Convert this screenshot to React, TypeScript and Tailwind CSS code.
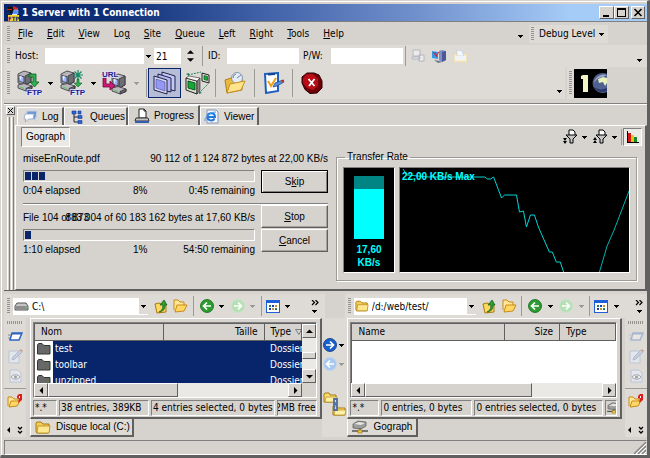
import type { ReactNode } from "react";

const raised = "border border-t-white border-l-white border-r-[#606060] border-b-[#606060] bg-[#d6d3ce]";
const sunken = "border border-t-[#808080] border-l-[#808080] border-r-white border-b-white";
const sans = "font-['Liberation_Sans',Arial,sans-serif]";

type Entry = { name: string; size: string; type: string };

const menus = ["File", "Edit", "View", "Log", "Site", "Queue", "Left", "Right", "Tools", "Help"];
const underlined: Record<string, number> = { Log: 2 };

const localFiles: Entry[] = [
  { name: "test", size: "", type: "Dossier" },
  { name: "toolbar", size: "", type: "Dossier" },
  { name: "unzipped", size: "", type: "Dossier" },
];

const ratePoints =
  "3,1 5,4 7,7 29,9 85,9 88,11 91,11 94,9 102,30 105,27 117,27 120,44 124,43 127,59 131,47 135,47 139,59 150,84 153,84 157,94 161,94 165,106";

function Grip({ className = "h-4" }: { className?: string }) {
  return (
    <div
      className={`w-[3px] shrink-0 bg-[repeating-linear-gradient(to_bottom,#94928c_0px,#94928c_1px,#dedbd6_1px,#dedbd6_2px)] ${className}`}
    />
  );
}

function HGrip() {
  return <div className="h-[3px] w-4 bg-[repeating-linear-gradient(to_right,#94928c_0px,#94928c_1px,#dedbd6_1px,#dedbd6_2px)]" />;
}

function Sep({ className = "h-5" }: { className?: string }) {
  return <div className={`w-px shrink-0 bg-[#9c9a94] ${className}`} />;
}

function Caret({ muted = false }: { muted?: boolean }) {
  return (
    <svg width="5" height="3" viewBox="0 0 5 3" className="shrink-0" shapeRendering="crispEdges">
      <path d="M0 0h5v1H4v1H3v1H2V2H1V1H0z" fill={muted ? "#9c9a94" : "#000"} />
    </svg>
  );
}

function CaretButton({ label, muted = false, className = "w-3" }: { label: string; muted?: boolean; className?: string }) {
  return (
    <button type="button" aria-label={label} disabled={muted} className={`flex h-4 items-center justify-center ${className}`}>
      <Caret muted={muted} />
    </button>
  );
}

function IconButton({ label, children, className = "", disabled = false }: { label: string; children: ReactNode; className?: string; disabled?: boolean }) {
  return (
    <button type="button" aria-label={label} disabled={disabled} className={`flex shrink-0 items-center justify-center ${className}`}>
      {children}
    </button>
  );
}

function Mnemonic({ text, at = 0 }: { text: string; at?: number }) {
  return (
    <>
      {text.slice(0, at)}
      <span className="underline underline-offset-1">{text[at]}</span>
      {text.slice(at + 1)}
    </>
  );
}

/* ---------- icons ---------- */

function AppIcon() {
  return (
    <svg width="14" height="16" viewBox="0 0 14 16" className="shrink-0">
      <path d="M1 2h5v4H1zM3 6h2v2H3z" fill="#111" />
      <path d="M6 1l5 2v3L6 4z" fill="#e02020" />
      <path d="M0 4h5v1H0z" fill="#e02020" />
      <path d="M7 5h4v4H6z" fill="#4f8fe8" stroke="#9cc4ff" strokeWidth=".6" />
      <path d="M5 9h5v1H5z" fill="#dfe8f8" />
      <rect x="1" y="10" width="11" height="6" fill="#ffd820" />
      <text x="1" y="15.500" fontSize="6" fontWeight="bold" fill="#1a1a90">FTP</text>
    </svg>
  );
}

function Computer({ x, y }: { x: number; y: number }) {
  return (
    <g transform={`translate(${x} ${y})`} stroke="#303038" strokeWidth=".8" strokeLinejoin="round">
      <path d="M1 3L7 0l7 2v9l-6 3-7-2z" fill="#b8b8bc" />
      <path d="M8 5l6-3v9l-6 3z" fill="#6d6d74" />
      <path d="M2 4.500l5 1.200v6L2 10.500z" fill="#9fb8ff" />
      <path d="M2.500 5l2.500.6-2 4z" fill="#eef3ff" stroke="none" />
      <path d="M1 14l6-1.500 8 2.500v2.500L9 20l-8-3z" fill="#b9b9bd" />
      <path d="M9 17.500l6-2.500v2.500L9 20z" fill="#66666c" />
      <path d="M3 16.200l4 1.200" stroke="#44c844" />
    </g>
  );
}

function FtpMark({ x, y, text = "FTP" }: { x: number; y: number; text?: string }) {
  return (
    <text
      x={x}
      y={y}
      fontSize="8"
      fontWeight="bold"
      fill="#20208c"
      stroke="#dfe2ff"
      strokeWidth="1.500"
      paintOrder="stroke"
      className="font-['Liberation_Sans',Arial,sans-serif]"
    >
      {text}
    </text>
  );
}

function ConnectIcon() {
  return (
    <svg width="26" height="26" viewBox="0 0 26 26">
      <Computer x={1} y={1} />
      <path d="M13 4h7v8h3l-4.500 5-4.500-5h3V7h-4z" fill="#2eb050" stroke="#0d5a22" strokeWidth=".8" />
      <FtpMark x={11} y={25} />
    </svg>
  );
}

function QuickConnectIcon() {
  return (
    <svg width="26" height="26" viewBox="0 0 26 26">
      <Computer x={1} y={1} />
      <path d="M19 0v10M14 5h10M15.500 1.500l7 7M22.500 1.500l-7 7" stroke="#138a68" strokeWidth="1.200" />
      <path d="M18 9h2v4h3l-4 4-4-4h3z" fill="#2eb050" stroke="#0d5a22" strokeWidth=".6" />
      <FtpMark x={11} y={25} />
    </svg>
  );
}

function UrlIcon() {
  return (
    <svg width="26" height="26" viewBox="0 0 26 26">
      <Computer x={9} y={4} />
      <path d="M1 8h3v6h4v-3l5 5-5 4v-3H1z" fill="#d01878" stroke="#700838" strokeWidth=".8" />
      <FtpMark x={0} y={7} text="URL" />
    </svg>
  );
}

function StackIcon() {
  return (
    <svg width="24" height="24" viewBox="0 0 24 24" strokeLinejoin="round" stroke="#20204c">
      <path d="M9 1l13 4v15L9 16z" fill="#c4c8f4" />
      <path d="M5 3l13 4v14L5 18z" fill="#b2b6ee" />
      <path d="M1 5l13 4v14L1 19z" fill="#d8d8e8" />
      <path d="M3 8l9 3v9l-9-3z" fill="#9498f4" stroke="#5558b0" strokeWidth=".7" />
    </svg>
  );
}

function MirrorIcon() {
  return (
    <svg width="26" height="24" viewBox="0 0 26 24" strokeLinejoin="round">
      <path d="M3 4L16 1M14 22l9-9" stroke="#20805c" strokeDasharray="2 1" />
      <path d="M1 3l3-1v3zM14 20l3 2-3 1z" fill="#20805c" />
      <path d="M1 7l11 3v13L1 19z" fill="#deded8" stroke="#202020" />
      <path d="M3 10l7 2v7l-7-2z" fill="#18a838" stroke="#0b5b1c" />
      <path d="M12 10l3-3v12l-3 4z" fill="#888" stroke="#202020" strokeWidth=".6" />
      <path d="M1 7l3-2 11 2-3 3z" fill="#f4f4f0" stroke="#202020" strokeWidth=".6" />
      <path d="M17 2l7 2v8l-7-2z" fill="#deded8" stroke="#202020" />
      <path d="M19 4.500l3.500 1v4l-3.500-1z" fill="#18a838" stroke="#0b5b1c" strokeWidth=".7" />
    </svg>
  );
}

function OpenFolderIcon() {
  return (
    <svg width="22" height="22" viewBox="0 0 22 22">
      <path d="M1 8l6-2 3 2 8-1v11l-15 3z" fill="#e8b93c" stroke="#b27f14" />
      <circle cx="13" cy="6" r="5.500" fill="#e4ebf4" stroke="#8897ad" />
      <path d="M13 6l4-3M9 6a4 4 0 013-4" stroke="#6684aa" fill="none" />
      <path d="M6 12l15-3-4 9-14 3z" fill="#ffe48b" stroke="#c69222" />
    </svg>
  );
}

function OptionsIcon() {
  return (
    <svg width="22" height="22" viewBox="0 0 22 22">
      <path d="M2 2l13-1v18L3 21z" fill="#fff" stroke="#1f5fbe" strokeWidth="2" />
      <path d="M5 1.500l7-.5v2l-7 .5z" fill="#12448e" />
      <path d="M5 9l3 5 5-8" fill="none" stroke="#eda21a" strokeWidth="2" />
      <path d="M10 15l2-4 8-3 1 2-7 4z" fill="#5a8fe0" stroke="#173f86" strokeWidth=".7" />
      <path d="M18 8.500l3-1v2l-2 1z" fill="#c83018" />
    </svg>
  );
}

function AbortIcon() {
  return (
    <svg width="22" height="22" viewBox="0 0 22 22">
      <path d="M6 1h7l5 2 3 6v7l-5 5-7 .5-5-4L1 11V5z" fill="#6e0008" stroke="#2c0000" />
      <path d="M6 2h6l5 5v7l-5 4-6-2-4-5V6z" fill="#b80c16" />
      <path d="M7.500 7l6 7M13.500 7L8 14" stroke="#fff" strokeWidth="1.800" />
    </svg>
  );
}

function LogoImage() {
  return (
    <svg width="33" height="29" viewBox="0 0 33 29" role="img" aria-label="Globe logo">
      <rect width="33" height="29" fill="#000" />
      <path d="M7 7l2-1h5v17H9V10H7z" fill="#f4f4c4" />
      <path d="M33 5a10 10 0 100 18z" fill="#51618f" />
      <path d="M33 6c-6-2-12 2-13 8 2-4 5-6 9-6z" fill="#9dabc5" />
      <path d="M24 10l5-2 4 1v5l-2 3-2-4-4 1z" fill="#e8f0bc" />
      <path d="M20 18c3 5 8 6 13 4v-3c-5 2-9 2-13-1z" fill="#29376a" />
    </svg>
  );
}

function ServersIcon() {
  return (
    <svg width="14" height="14" viewBox="0 0 14 14">
      <path d="M7 2l3-1 4 1v9l-4 2-3-2z" fill="#7d8dcc" />
      <path d="M10 3l4-1v9l-4 2z" fill="#4b5796" />
      <path d="M0 2l6 1v7L0 9z" fill="#2f9bea" />
      <path d="M1 3l3 4 3-4M3 3l2 5" stroke="#d52838" fill="none" />
      <path d="M2 11l6 1 2 1-4 1z" fill="#707890" />
    </svg>
  );
}

function GhostServersIcon() {
  return (
    <svg width="14" height="14" viewBox="0 0 14 14">
      <path d="M2 1h7v6H2zM1 8h8v2H1zM8 6h5v6H8z" fill="#ebebef" stroke="#aaaab4" strokeWidth=".8" />
    </svg>
  );
}

function GhostFolderIcon() {
  return (
    <svg width="15" height="14" viewBox="0 0 15 14">
      <path d="M1 5h13v8H1z" fill="#f8edcc" stroke="#ecd9a8" />
      <path d="M4 1l5 1 2 5H4z" fill="#f6f9fc" stroke="#bfd0e0" strokeWidth=".7" />
      <path d="M2 7h11v4H2z" fill="#eff4f8" />
    </svg>
  );
}

function LogIcon() {
  return (
    <svg width="15" height="13" viewBox="0 0 15 13">
      <path d="M4 1h10l-1 7h-1l1 3-4-3H3z" fill="#6f98d8" stroke="#c4d2e4" />
      <path d="M2 4h9l-1 5H6l-4 3 1-3H1z" fill="#fbfdff" stroke="#93a7c0" strokeWidth=".8" />
    </svg>
  );
}

function QueueIcon() {
  return (
    <svg width="12" height="14" viewBox="0 0 12 14">
      <path d="M3 3v9h4M3 7h4" fill="none" stroke="#222" />
      <path d="M1 1h4v3H1zM7 1h3v3H7zM7 5.500h4v3H7zM7 10.500h4v3H7z" fill="#2b65d8" stroke="#103a96" strokeWidth=".6" />
    </svg>
  );
}

function ProgressIcon() {
  return (
    <svg width="16" height="16" viewBox="0 0 16 16">
      <path d="M5 1h5l2 2v7H5z" fill="#fff" stroke="#222" />
      <path d="M10 1v2h2" fill="none" stroke="#222" />
      <path d="M2 10h12l1 3H1z" fill="#c4c4c4" stroke="#333" />
      <path d="M1 13h14v2H1z" fill="#355cb0" />
    </svg>
  );
}

function BrowserIcon() {
  return (
    <svg width="15" height="15" viewBox="0 0 15 15">
      <path d="M3 1h9l2 2v11H3z" fill="#f5f8ff" stroke="#8296be" />
      <path d="M3.500 8h7.500c0-5-7.500-5-7.500 0 0 4 5.500 4.500 7 1.500" fill="none" stroke="#2277dc" strokeWidth="2" />
      <path d="M1 12c-1-3 5-9 11-9" fill="none" stroke="#3aa2f0" />
    </svg>
  );
}

function FunnelIcon({ up = false }: { up?: boolean }) {
  return (
    <svg width="16" height="16" viewBox="0 0 16 16">
      <path d={up ? "M3 8l2 3H1zM3 11l2 3H1z" : "M3 12L5 9H1zM3 15l2-3H1z"} fill="#000" />
      <path d="M7 6V1h4l2 2v3" fill="#fff" stroke="#000" />
      <path d="M4 6h11l-4 4v4H8v-4z" fill="#c6c6c6" stroke="#000" />
    </svg>
  );
}

function ChartIcon() {
  return (
    <svg width="14" height="13" viewBox="0 0 14 13" shapeRendering="crispEdges">
      <path d="M2 2h3v9H2z" fill="#d01818" />
      <path d="M5 4h3v7H5z" fill="#e8c418" />
      <path d="M8 6h3v5H8z" fill="#188a28" />
      <path d="M1 0h1v11h11v1H1z" fill="#000" />
    </svg>
  );
}

function DriveIcon() {
  return (
    <svg width="15" height="9" viewBox="0 0 15 9" className="shrink-0">
      <path d="M3 1h9l2 3v4H1V4z" fill="#c4c4c4" stroke="#555" />
      <path d="M1 4h13v3H1z" fill="#8c8c8c" />
      <path d="M11 5.500h2" stroke="#4dd04d" />
    </svg>
  );
}

function FolderIcon({ className = "h-3 w-4" }: { className?: string }) {
  return (
    <svg viewBox="0 0 16 13" className={`shrink-0 ${className}`}>
      <path d="M1 11V2l1-1h4l2 2h6v8l-1 1H2z" fill="#f4cc58" stroke="#a67a0e" />
      <path d="M3 5h12l-1 7H2z" fill="#ffe78d" stroke="#b48a1c" strokeWidth=".8" />
    </svg>
  );
}

function DarkFolderIcon() {
  return (
    <svg width="14" height="12" viewBox="0 0 14 12" className="shrink-0">
      <path d="M.5 11V2l1-1.500H5L7 2.500h6V11z" fill="#686868" stroke="#2c3c28" />
    </svg>
  );
}

function UpFolderIcon() {
  return (
    <svg width="14" height="15" viewBox="0 0 14 15">
      <path d="M1 5l4-1 2 1h5v8l-9 1z" fill="#ffd95f" stroke="#a67a0e" />
      <path d="M5 13c4-2 4-5 3.500-7H6l4-5 3 5h-2c0 4-1 6-6 7z" fill="#2f9c34" stroke="#0e5a14" strokeWidth=".7" />
    </svg>
  );
}

function OpenIcon() {
  return (
    <svg width="15" height="14" viewBox="0 0 15 14">
      <path d="M1 11V1h4l2 2h4v3" fill="#ffe795" stroke="#c98b14" />
      <path d="M4 6l10 0-3 6-9 1z" fill="#ffd766" stroke="#c98b14" />
    </svg>
  );
}

function RoundArrow({ fill, rim, left = false }: { fill: string; rim: string; left?: boolean }) {
  return (
    <svg width="14" height="14" viewBox="0 0 14 14">
      <circle cx="7" cy="7" r="6.500" fill={fill} stroke={rim} strokeWidth=".8" />
      <path d={left ? "M11 7H4M7 3.500L3.500 7 7 10.500" : "M3 7h7M7 3.500L10.500 7 7 10.500"} fill="none" stroke="#fff" strokeWidth="1.700" />
    </svg>
  );
}

function ViewIcon() {
  return (
    <svg width="14" height="13" viewBox="0 0 14 13" shapeRendering="crispEdges">
      <rect width="14" height="13" fill="#1f5fd8" />
      <rect x="1" y="3" width="12" height="9" fill="#fff" />
      <path d="M3 5h2v2H3zM9 8h2v2H9z" fill="#2a7a5c" />
      <path d="M6 5h2v2H6zM3 8h2v2H3z" fill="#1f3fb0" />
      <path d="M9 5h2v2H9zM6 8h2v2H6z" fill="#bd9430" />
    </svg>
  );
}

function RenameIcon({ muted = false }: { muted?: boolean }) {
  return (
    <svg width="15" height="11" viewBox="0 0 15 11" className={muted ? "opacity-30" : ""}>
      <path d="M4 2h10l-3 7H2z" fill="#fff" stroke="#2b65c0" strokeWidth="1.500" />
      <path d="M4 2h10l-.5 1.500H3.500z" fill="#2b65c0" />
      <path d="M0 4h3M0 7h2" stroke="#888" />
    </svg>
  );
}

function EditIcon() {
  return (
    <svg width="15" height="15" viewBox="0 0 15 15" opacity=".6">
      <path d="M1 2h10v12H1z" fill="#e7effb" stroke="#a5b7d6" />
      <path d="M4 11l1-3 7-7 2 2-7 7z" fill="#b4c6e4" stroke="#7e90b4" strokeWidth=".7" />
      <path d="M12 1l1-1 2 2-1 1z" fill="#e06848" />
    </svg>
  );
}

function PreviewIcon() {
  return (
    <svg width="13" height="14" viewBox="0 0 13 14" opacity=".6">
      <path d="M1 1h8l3 3v9H1z" fill="#e7effb" stroke="#a5b7d6" />
      <path d="M2 8c2-3 7-3 9 0-2 3-7 3-9 0z" fill="#fff" stroke="#7c8694" />
      <circle cx="6.500" cy="8" r="1.500" fill="#6d7885" />
    </svg>
  );
}

function NewFolderIcon() {
  return (
    <svg width="16" height="14" viewBox="0 0 16 14">
      <path d="M1 12V3h4l2 2h4v3" fill="#ffe795" stroke="#c98b14" />
      <path d="M4 7l9 0-3 5-8 1z" fill="#ffd766" stroke="#c98b14" />
      <path d="M10 2l2-2h3v6l-4 3 1-4-2-1z" fill="#dd1c1c" />
      <path d="M12 2h1v2h-1z" fill="#fff" />
    </svg>
  );
}

function LinkedFoldersIcon() {
  return (
    <svg width="24" height="24" viewBox="0 0 24 24">
      <path d="M1 10V2l1-1h4l1 2h6v7zM10 22v-8h4l1 2h7v7H10z" fill="#ffdc6e" stroke="#a67a0e" />
      <path d="M3 5h11v5H2zM12 18h11l-1 5H11z" fill="#fff0a8" stroke="#a67a0e" strokeWidth=".6" />
      <path d="M11 7h3v5h-3zM11 12h3v6h-3z" fill="none" stroke="#4f6ea6" strokeWidth="1.800" />
    </svg>
  );
}

function RemoteDriveIcon({ className = "h-[14px] w-4" }: { className?: string }) {
  return (
    <svg viewBox="0 0 16 14" className={className}>
      <path d="M1 4l5-3 8 1v4l-5 3-8-1z" fill="#9d9d9d" stroke="#555" strokeWidth=".7" />
      <path d="M2 4l5-2 6 1-4 2z" fill="#e5e5e5" />
      <path d="M0 11h16" stroke="#555" strokeWidth="1.500" />
      <path d="M8 8v3" stroke="#555" />
      <path d="M6 10h4v3H6z" fill="#f2cc37" stroke="#8f6a0c" strokeWidth=".6" />
    </svg>
  );
}

/* ---------- pieces ---------- */

function CommandMore() {
  return (
    <button type="button" aria-label="More commands" className="flex w-3 flex-col items-center gap-1">
      <svg width="8" height="6" viewBox="0 0 8 6">
        <path d="M1 0l2.500 2.500L1 5M4.500 0L7 2.500 4.500 5" fill="none" stroke="#000" strokeWidth="1.200" />
      </svg>
      <Caret />
    </button>
  );
}

function FolderBar({ path, label, icon, more, className }: { path: string; label: string; icon: ReactNode; more: string; className: string }) {
  return (
    <div className={`flex h-6 items-center bg-[#dedbd6] ${className}`}>
      <Grip />
      <div className="ml-[3px] flex h-[17px] min-w-0 flex-1 items-center bg-white pl-px">
        {icon}
        <input aria-label={label} defaultValue={path} className="ml-[3px] h-[17px] w-0 min-w-0 flex-1 bg-transparent outline-none" />
        <CaretButton label="Choose folder" className="w-[9px] bg-[#dedbd6]" />
      </div>
      <IconButton label="Parent folder" className="ml-[5px] w-4"><UpFolderIcon /></IconButton>
      <IconButton label="Open folder" className="ml-1 w-4"><OpenIcon /></IconButton>
      <Sep className="ml-1 h-5" />
      <IconButton label="Back" className="ml-[6px]"><RoundArrow left fill="#2c9c30" rim="#126818" /></IconButton>
      <CaretButton label="Back history" className="ml-[2px] w-3" />
      <IconButton label="Forward" disabled className="ml-[3px]"><RoundArrow fill="#b5e0b5" rim="#c5e4c5" /></IconButton>
      <CaretButton label="Forward history" muted className="ml-[2px] w-3" />
      <Sep className="ml-[2px] h-5" />
      <IconButton label="View mode" className="ml-1"><ViewIcon /></IconButton>
      <CaretButton label="View options" className="ml-[2px] w-3" />
      <div className={more}><CommandMore /></div>
    </div>
  );
}

function SideBar({ muted = false }: { muted?: boolean }) {
  return (
    <div className="flex w-[22px] shrink-0 flex-col items-center bg-[#dedbd6] pt-[3px] pb-[2px]">
      <HGrip />
      <IconButton label="Rename" disabled={muted} className="mt-1 h-4"><RenameIcon muted={muted} /></IconButton>
      <IconButton label="Edit" disabled className="mt-1 h-4"><EditIcon /></IconButton>
      <IconButton label="Preview" disabled className="mt-1 h-4"><PreviewIcon /></IconButton>
      <div className="mt-1 h-px w-full bg-[#9c9a94]" />
      <IconButton label="New folder" className="mt-1 h-4"><NewFolderIcon /></IconButton>
      <IconButton label="More tools" className="mt-auto gap-2">
        <svg width="16" height="9" viewBox="0 0 16 9">
          <path d="M3 1v6L0 4z" fill="#000" />
          <path d="M11 1l2 2 2-2M11 5l2 2 2-2" fill="none" stroke="#000" strokeWidth="1.300" />
        </svg>
      </IconButton>
    </div>
  );
}

function ScrollButton({ label, d }: { label: string; d: string }) {
  return (
    <button type="button" aria-label={label} className={`flex h-[14px] w-[14px] shrink-0 items-center justify-center ${raised}`}>
      <svg width="7" height="7" viewBox="0 0 7 7"><path d={d} /></svg>
    </button>
  );
}

function HScroll({ thumb }: { thumb: string }) {
  return (
    <div className="flex min-w-0 flex-1 bg-[#ebe9e5]">
      <ScrollButton label="Scroll left" d="M5 0v7L1.500 3.500z" />
      <div className={`${raised} ${thumb}`} />
      <div className="flex-1" />
      <ScrollButton label="Scroll right" d="M2 0v7l3.500-3.500z" />
    </div>
  );
}

function FileTable({ heads, rows, widths, sorted = false }: { heads: string[]; rows: Entry[]; widths: string[]; sorted?: boolean }) {
  return (
    <table className="w-full table-fixed border-collapse">
      <thead>
        <tr className="h-4">
          {heads.map((h, i) => (
            <th
              key={h}
              scope="col"
              className={`overflow-hidden whitespace-nowrap border-r border-b border-[#606060] bg-[#d6d3ce] p-0 font-normal ${widths[i]} ${i === 1 ? "pr-[6px] text-right" : "pl-[6px] text-left"}`}
            >
              {h}
              {sorted && i === 2 && (
                <svg width="7" height="6" viewBox="0 0 7 6" className="ml-1 inline">
                  <path d="M.5 .5h6L4 5.500z" fill="none" stroke="#808080" />
                </svg>
              )}
            </th>
          ))}
        </tr>
      </thead>
      <tbody>
        {rows.map((r) => (
          <tr key={r.name} className="h-4 text-white">
            <td className="p-0">
              <div className="flex h-4 items-center gap-[2px] pl-[2px]">
                <DarkFolderIcon />
                <span className="flex h-4 flex-1 items-center bg-[#08246b] pl-[2px]">{r.name}</span>
              </div>
            </td>
            <td className="bg-[#08246b] p-0">{r.size}</td>
            <td className="overflow-hidden whitespace-nowrap bg-[#08246b] p-0 pl-[6px]">{r.type}</td>
          </tr>
        ))}
      </tbody>
    </table>
  );
}

function StatusCell({ children, className }: { children: ReactNode; className: string }) {
  return <div className={`flex h-4 items-center overflow-hidden whitespace-nowrap px-px ${sunken} ${className}`}>{children}</div>;
}

function MeterBar({ label, value, blocks }: { label: string; value: number; blocks: number }) {
  return (
    <div role="progressbar" aria-label={label} aria-valuenow={value} className={`flex h-3 gap-px p-px ${sunken}`}>
      {Array.from({ length: blocks }, (_, i) => (
        <div key={i} className="w-[6px] bg-[#08246b]" />
      ))}
    </div>
  );
}

function PushButton({ text, at = 0, focus = false, className }: { text: string; at?: number; focus?: boolean; className: string }) {
  return (
    <button
      type="button"
      className={`w-full ${className} ${focus ? "border border-black shadow-[inset_1px_1px_0_#fff,inset_-1px_-1px_0_#808080]" : `${raised} shadow-[inset_-1px_-1px_0_#a5a29c]`}`}
    >
      <Mnemonic text={text} at={at} />
    </button>
  );
}

function Tab({ text, icon, selected = false, className }: { text: string; icon: ReactNode; selected?: boolean; className: string }) {
  return (
    <button
      type="button"
      role="tab"
      aria-selected={selected}
      className={`flex items-center border-t border-l border-white border-r-2 border-r-[#606060] ${selected ? "h-5 bg-[#d6d3ce]" : "h-[18px] bg-[#dedbd6]"} ${className}`}
    >
      {icon}
      <span>{text}</span>
    </button>
  );
}

/* ---------- sections ---------- */

function TitleBar() {
  return (
    <header className="flex h-[18px] items-center border-b border-[#808080] bg-[linear-gradient(to_right,#08246b_0%,#103078_18%,#4060a8_40%,#7090cc_64%,#a5cbf7_88%)] pr-[2px] pl-[3px]">
      <AppIcon />
      <h1 className="ml-px flex-1 text-[10px] font-bold text-white">1 Server with 1 Connection</h1>
      <button type="button" aria-label="Minimize" className={`h-[13px] w-[15px] ${raised}`}>
        <svg width="13" height="11" viewBox="0 0 13 11"><path d="M3 8h6v2H3z" /></svg>
      </button>
      <button type="button" aria-label="Maximize" className={`h-[13px] w-[15px] ${raised}`}>
        <svg width="13" height="11" viewBox="0 0 13 11" shapeRendering="crispEdges"><path d="M2 1h9v9H2zM3 3v6h7V3z" fillRule="evenodd" /></svg>
      </button>
      <button type="button" aria-label="Close" className={`ml-[2px] h-[13px] w-[14px] ${raised}`}>
        <svg width="12" height="11" viewBox="0 0 12 11"><path d="M2.500 2l7 7M9.500 2l-7 7" stroke="#000" strokeWidth="1.600" /></svg>
      </button>
    </header>
  );
}

function MenuRow() {
  return (
    <div className="mt-px flex h-[22px] items-center pl-[3px]">
      <Grip />
      <nav className="ml-2 flex flex-1 items-center gap-[14px]">
        {menus.map((m) => (
          <button key={m} type="button"><Mnemonic text={m} at={underlined[m] ?? 0} /></button>
        ))}
      </nav>
      <CaretButton label="More menus" className="mt-1 w-3" />
      <div className="ml-[3px] flex h-[18px] w-[79px] items-center bg-[#dedbd6] pl-[2px]">
        <Grip className="h-[14px]" />
        <button type="button" className="ml-[5px] flex items-center gap-1 whitespace-nowrap">Debug Level <Caret /></button>
      </div>
      <div className="w-[39px]" />
    </div>
  );
}

function AddressRow() {
  const box = "h-4 bg-white px-[2px] outline-none";
  return (
    <form className="flex h-[22px] items-center bg-[#dedbd6] pr-1 pl-[3px]">
      <Grip />
      <label htmlFor="host" className="ml-[5px] w-[30px]">Host:</label>
      <input id="host" className={`w-[99px] ${box}`} />
      <CaretButton label="Recent hosts" className="w-2" />
      <input aria-label="Port" defaultValue="21" className={`ml-[2px] w-[27px] ${box}`} />
      <div className="ml-[6px] flex flex-col gap-1">
        <button type="button" aria-label="Increase port" className="block">
          <svg width="7" height="4" viewBox="0 0 8 4"><path d="M0 4l4-4 4 4z" /></svg>
        </button>
        <button type="button" aria-label="Decrease port" className="block">
          <svg width="7" height="4" viewBox="0 0 8 4"><path d="M0 0l4 4 4-4z" /></svg>
        </button>
      </div>
      <Sep className="ml-2 h-5" />
      <label htmlFor="login" className="ml-[5px] w-[19px]">ID:</label>
      <input id="login" className={`w-[72px] ${box}`} />
      <label htmlFor="password" className="ml-1 w-7">P/W:</label>
      <input id="password" type="password" className={`w-[72px] ${box}`} />
      <Sep className="ml-[2px] h-5" />
      <IconButton label="Connect" disabled className="ml-[5px]"><GhostServersIcon /></IconButton>
      <IconButton label="Reconnect" className="ml-[7px]"><ServersIcon /></IconButton>
      <IconButton label="Save site" disabled className="ml-[7px]"><GhostFolderIcon /></IconButton>
      <div className="flex-1" />
      <CaretButton label="More address options" className="mt-2 w-2" />
    </form>
  );
}

function ToolRow() {
  return (
    <div className="flex h-8 items-center">
      <div className="flex h-full flex-1 items-center bg-[#dedbd6] pl-[3px]">
        <Grip className="h-6" />
        <IconButton label="Connect to server" className="ml-[6px]"><ConnectIcon /></IconButton>
        <CaretButton label="Server list" className="ml-[2px] w-3" />
        <IconButton label="Quick connect" className="ml-[3px]"><QuickConnectIcon /></IconButton>
        <CaretButton label="Quick connect list" className="ml-[2px] w-3" />
        <IconButton label="Open URL" className="ml-[3px]"><UrlIcon /></IconButton>
        <CaretButton label="URL list" muted className="ml-[2px] w-3" />
        <Sep className="ml-1 h-7" />
        <IconButton label="Queue windows" className="ml-px h-[30px] w-[33px] border border-[#08246b] bg-[#b5bed6]"><StackIcon /></IconButton>
        <IconButton label="Mirror" className="ml-1"><MirrorIcon /></IconButton>
        <Sep className="ml-1 h-7" />
        <IconButton label="Browse" className="ml-2"><OpenFolderIcon /></IconButton>
        <Sep className="ml-2 h-7" />
        <IconButton label="Options" className="ml-2"><OptionsIcon /></IconButton>
        <Sep className="ml-[7px] h-7" />
        <IconButton label="Abort" className="ml-2"><AbortIcon /></IconButton>
        <div className="flex-1" />
        <CaretButton label="More tools" className="mt-4 w-3" />
      </div>
      <div className="ml-[2px] flex h-full items-center bg-[#dedbd6] pl-[2px]">
        <Grip className="h-6" />
        <div className="ml-[2px]"><LogoImage /></div>
      </div>
      <div className="w-10" />
    </div>
  );
}

function Transfers() {
  return (
    <div className={`grid w-[305px] shrink-0 grid-cols-[232px_67px] content-start gap-x-[6px] leading-3 ${sans}`}>
      <div className="col-span-2 flex h-[17px] justify-between">
        <span>miseEnRoute.pdf</span>
        <span>90 112 of 1 124 872 bytes at 22,00 KB/s</span>
      </div>
      <div>
        <MeterBar label="miseEnRoute.pdf" value={8} blocks={3} />
        <div className="mt-[3px] grid grid-cols-[110px_1fr_auto]"><span>0:04 elapsed</span><span>8%</span><span>0:45 remaining</span></div>
      </div>
      <PushButton text="Skip" at={1} focus className="h-[23px]" />
      <hr className="col-span-2 mt-[6px] border-t border-b border-t-[#808080] border-b-white" />
      <div>
        <div className="mt-[7px] grid h-[17px]">
          <span className="col-start-1 row-start-1">File 104 of 873</span>
          <span className="col-start-1 row-start-1 justify-self-end">883 004 of 60 183 162 bytes at 17,60 KB/s</span>
        </div>
        <MeterBar label="All files" value={1} blocks={1} />
        <div className="mt-[3px] grid grid-cols-[110px_1fr_auto]"><span>1:10 elapsed</span><span>1%</span><span>54:50 remaining</span></div>
      </div>
      <div>
        <PushButton text="Stop" className="h-[23px]" />
        <PushButton text="Cancel" className="mt-px h-[23px]" />
      </div>
    </div>
  );
}

function TransferRate() {
  return (
    <fieldset className={`ml-2 flex min-w-0 flex-1 gap-1 border border-[#9c9a94] px-[6px] pt-1 pb-[7px] shadow-[1px_1px_0_#fff,inset_1px_1px_0_#fff] ${sans}`}>
      <legend className="ml-[2px] px-[2px] leading-3">Transfer Rate</legend>
      <div className={`flex h-[106px] w-[52px] flex-col items-center bg-black pt-2 ${sunken}`}>
        <div className="h-[13px] w-[30px] bg-[#008484]" />
        <div className="h-[50px] w-[30px] bg-[#00ffff]" />
        <p className="mt-1 text-center leading-[13px] font-bold text-[#00ffff]">17,60<br />KB/s</p>
      </div>
      <div className={`relative h-[106px] min-w-0 flex-1 bg-black ${sunken}`}>
        <svg width="100%" height="104" viewBox="0 0 230 104" preserveAspectRatio="none">
          <polyline points={ratePoints} fill="none" stroke="#00d8d8" />
          <polyline points="200,105 203,95 208,78 215,62 222,44 230,23" fill="none" stroke="#00b4b4" />
        </svg>
        <span className="absolute top-[3px] left-[2px] leading-3 font-bold whitespace-nowrap text-[#00ffff]">22,00 KB/s Max</span>
      </div>
    </fieldset>
  );
}

function ProgressPanel() {
  return (
    <section className="flex border-b border-[#606060] pt-px">
      <div className="flex w-[11px] shrink-0 flex-col items-center pl-px">
        <button type="button" aria-label="Close panel" className={`h-[9px] w-[9px] ${raised}`}>
          <svg width="7" height="7" viewBox="0 0 7 7"><path d="M1 1l5 5M6 1L1 6" stroke="#000" /></svg>
        </button>
        <div className="mt-[2px] flex flex-1 gap-px">
          <div className="w-[3px] border-x border-l-white border-r-[#808080]" />
          <div className="w-[3px] border-x border-l-white border-r-[#808080]" />
        </div>
      </div>
      <div className="min-w-0 flex-1">
        <div role="tablist" className={`flex h-[19px] items-end pl-[2px] ${sans}`}>
          <Tab text="Log" icon={<LogIcon />} className="w-[47px] gap-1 pl-[5px]" />
          <Tab text="Queues" icon={<QueueIcon />} className="w-16 gap-[7px] pl-[6px]" />
          <Tab text="Progress" icon={<ProgressIcon />} selected className="w-[72px] gap-1 pl-[5px]" />
          <Tab text="Viewer" icon={<BrowserIcon />} className="w-[59px] gap-[5px] pl-[3px]" />
        </div>
        <div className="border border-t-white border-l-white border-r-2 border-r-[#606060] border-b-[#606060] pt-px pr-2 pb-2 pl-[5px]">
          <div className={`flex items-center ${sans}`}>
            <button type="button" aria-pressed="true" className={`h-5 w-[49px] bg-[#ebe9e5] ${sunken}`}>Gograph</button>
            <div className="flex-1" />
            <IconButton label="Collapse filter"><FunnelIcon /></IconButton>
            <CaretButton label="Collapse filter options" />
            <IconButton label="Expand filter" className="ml-[2px]"><FunnelIcon up /></IconButton>
            <CaretButton label="Expand filter options" />
            <Sep className="ml-px h-4" />
            <button type="button" aria-label="Show graph" aria-pressed="true" className={`-mr-[5px] ml-px flex h-[18px] w-[19px] items-center justify-center bg-[#ebe9e5] ${sunken}`}><ChartIcon /></button>
          </div>
          <div className="mt-1 flex pl-[2px]">
            <div className="pt-[2px]"><Transfers /></div>
            <TransferRate />
          </div>
        </div>
      </div>
    </section>
  );
}

function LocalPane() {
  return (
    <div className="min-w-0 flex-[293]">
      <div className="border border-t-white border-l-white border-r-2 border-r-[#606060] border-b-2 border-b-[#606060] pt-[3px] pr-[3px] pb-px pl-[2px]">
        <div className={sunken}>
          <div className="flex h-[60px] border-t border-l border-[#606060] bg-white">
            <div className="h-[59px] min-w-0 flex-1 overflow-hidden">
              <FileTable heads={["Nom", "Taille", "Type"]} widths={["w-[128px]", "w-[101px]", ""]} rows={localFiles} sorted />
            </div>
            <div className="flex w-[14px] shrink-0 flex-col bg-[#ebe9e5]">
              <ScrollButton label="Scroll up" d="M0 5h7L3.500 1.500z" />
              <div className="flex-1" />
              <div className={`h-[7px] ${raised}`} />
              <div className="h-[10px]" />
              <ScrollButton label="Scroll down" d="M0 2h7L3.500 5.500z" />
            </div>
          </div>
          <div className="flex bg-[#d6d3ce]">
            <HScroll thumb="w-[130px]" />
            <div className="w-[14px]" />
          </div>
        </div>
        <div className="mt-[2px] flex gap-[2px]">
          <StatusCell className="w-6">*.*</StatusCell>
          <StatusCell className="w-[90px]">38 entries, 389KB</StatusCell>
          <StatusCell className="min-w-0 flex-1">4 entries selected, 0 bytes</StatusCell>
          <StatusCell className="w-10 justify-end">502MB free</StatusCell>
        </div>
      </div>
      <button type="button" className={`flex h-[18px] w-[104px] items-center gap-[5px] border-b-2 border-l border-r-2 border-[#606060] border-l-white bg-[#dedbd6] pl-1 ${sans}`}>
        <FolderIcon className="h-[13px] w-4" />
        Disque local (C:)
      </button>
    </div>
  );
}

function RemotePane() {
  return (
    <div className="min-w-0 flex-[275]">
      <div className="border border-t-white border-l-white border-r-2 border-r-[#606060] border-b-2 border-b-[#606060] pt-[3px] pr-[3px] pb-px pl-[2px]">
        <div className={sunken}>
          <div className="h-[60px] overflow-hidden border-t border-l border-[#606060] bg-white">
            <FileTable heads={["Name", "Size", "Type"]} widths={["", "w-[55px]", "w-[56px]"]} rows={[]} />
          </div>
          <HScroll thumb="w-[167px]" />
        </div>
        <div className="mt-[2px] flex gap-[2px]">
          <StatusCell className="w-[29px]">*.*</StatusCell>
          <StatusCell className="w-[91px]">0 entries, 0 bytes</StatusCell>
          <StatusCell className="min-w-0 flex-1">0 entries selected, 0 bytes</StatusCell>
          <StatusCell className="w-3"><RemoteDriveIcon className="h-3 w-[14px] shrink-0" /></StatusCell>
        </div>
      </div>
      <button type="button" className={`flex h-[18px] w-[71px] items-center gap-[5px] border-b-2 border-l border-r-2 border-[#606060] border-l-white bg-[#dedbd6] pl-1 ${sans}`}>
        <RemoteDriveIcon />
        Gograph
      </button>
    </div>
  );
}

function TransferColumn() {
  return (
    <div className="flex w-[25px] shrink-0 flex-col bg-[#dedbd6] pt-[19px] pl-px">
      <div className="flex items-center">
        <IconButton label="Send to right"><RoundArrow fill="#1660d0" rim="#0a3478" /></IconButton>
        <CaretButton label="Send options" className="w-2" />
      </div>
      <div className="mt-[3px] flex items-center">
        <IconButton label="Send to left" disabled><RoundArrow left fill="#a8c8f0" rim="#bfd4ee" /></IconButton>
        <CaretButton label="Receive options" muted className="w-2" />
      </div>
      <IconButton label="Link folders" className="mt-[20px]"><LinkedFoldersIcon /></IconButton>
    </div>
  );
}

export default function App() {
  return (
    <div className="flex min-h-screen flex-col border-t border-l border-r-[3px] border-b-[3px] border-[#d6d3ce] border-r-[#606060] border-b-[#606060] bg-[#d6d3ce] pt-[3px] pl-[3px] font-['DejaVu_Sans_Condensed','DejaVu_Sans',sans-serif] text-[10px] leading-[14px] text-black shadow-[inset_1px_1px_0_#fff]">
      <TitleBar />
      <MenuRow />
      <AddressRow />
      <ToolRow />
      <div className="mt-1 border-t border-b border-t-[#808080] border-b-white" />
      <ProgressPanel />
      <main className="mt-[3px]">
        <div className="flex">
          <FolderBar label="Local folder" path="C:\" icon={<DriveIcon />} more="ml-[15px]" className="flex-[320] pr-1 pl-[3px]" />
          <FolderBar label="Remote folder" path="/d:/web/test/" icon={<FolderIcon className="h-3 w-[14px]" />} more="ml-[11px]" className="ml-5 flex-[303] pr-[2px] pl-[3px]" />
        </div>
        <div className="flex">
          <SideBar />
          <div className="w-1" />
          <LocalPane />
          <TransferColumn />
          <RemotePane />
          <div className="w-[3px]" />
          <SideBar muted />
        </div>
      </main>
      <footer className="mt-[3px] flex flex-1 items-end justify-end border border-t-[#808080] border-l-[#808080] border-r-transparent border-b-white">
        <svg width="12" height="12" viewBox="0 0 12 12">
          <path d="M0 12L12 0M4 12l8-8M8 12l4-4" stroke="#808080" strokeWidth="1.300" />
          <path d="M2 12L12 2M6 12l6-6M10 12l2-2" stroke="#fff" />
        </svg>
      </footer>
    </div>
  );
}
